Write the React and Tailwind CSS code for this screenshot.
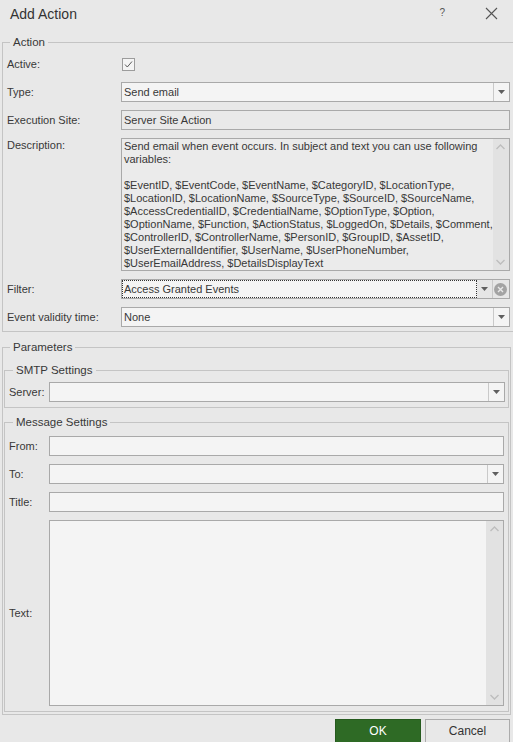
import React from 'react'

const DESC_LINES = [
  'Send email when event occurs. In subject and text you can use following',
  'variables:',
  '',
  '$EventID, $EventCode, $EventName, $CategoryID, $LocationType,',
  '$LocationID, $LocationName, $SourceType, $SourceID, $SourceName,',
  '$AccessCredentialID, $CredentialName, $OptionType, $Option,',
  '$OptionName, $Function, $ActionStatus, $LoggedOn, $Details, $Comment,',
  '$ControllerID, $ControllerName, $PersonID, $GroupID, $AssetID,',
  '$UserExternalIdentifier, $UserName, $UserPhoneNumber,',
  '$UserEmailAddress, $DetailsDisplayText',
]

function Arrow() {
  return (
    <svg width="7" height="4" viewBox="0 0 7 4">
      <path d="M0 0 H7 L3.5 4 Z" fill="#5f5f5f" />
    </svg>
  )
}

function DropButton() {
  return (
    <div className="w-[16px] h-full shrink-0 border-l border-[#c9c9c9] flex items-center justify-center">
      <Arrow />
    </div>
  )
}

function Chevron({ up }) {
  return (
    <svg width="9" height="6" viewBox="0 0 9 6">
      <path d={up ? 'M0.5 5 L4.5 1 L8.5 5' : 'M0.5 1 L4.5 5 L8.5 1'} fill="none" stroke="#bdbdbd" strokeWidth="1.4" />
    </svg>
  )
}

function ScrollStrip({ w }) {
  return (
    <div className={`${w} h-full shrink-0 bg-[#e2e2e2] flex flex-col items-center justify-between py-[5px]`}>
      <Chevron up />
      <Chevron />
    </div>
  )
}

function Combo({ value }) {
  return (
    <div className="flex-1 h-[20px] border border-[#a9a9a9] bg-[#f4f4f4] flex items-center">
      <div className="flex-1 pl-[2px] whitespace-nowrap">{value}</div>
      <DropButton />
    </div>
  )
}

function TextInput() {
  return <div className="flex-1 h-[20px] border border-[#a9a9a9] bg-[#f4f4f4]" />
}

function Row({ label, labelW, children, top }) {
  return (
    <div className={`flex ${top ? 'items-start' : 'items-center'}`}>
      <div className={`${labelW} shrink-0 whitespace-nowrap ${top ? 'pt-[1px]' : ''}`}>{label}</div>
      {children}
    </div>
  )
}

export default function App() {
  return (
    <div className="w-[513px] h-[742px] overflow-hidden bg-[#e8e8e8] text-[#383838] text-[11px] leading-[13px] font-['Liberation_Sans',Arial,sans-serif] flex flex-col">
      {/* title bar */}
      <div className="h-[34px] shrink-0 flex items-start pt-[6px] pl-[10px] pr-[15px]">
        <div className="text-[14px] leading-[16px] text-[#333]">Add Action</div>
        <div className="ml-auto mr-[40px] mt-[1px] text-[10px] leading-[12px] text-[#555]">?</div>
        <svg width="13" height="13" viewBox="0 0 13 13" className="mt-[1px]">
          <path d="M1 1 L12 12 M12 1 L1 12" stroke="#555" strokeWidth="1.1" />
        </svg>
      </div>

      {/* Action group */}
      <fieldset className="mx-[2px] border border-[#c4c4c4] px-[4px] pb-[4px]">
        <legend className="ml-[3px] px-[3px] text-[11.5px] leading-[16px]">Action</legend>
        <div className="flex flex-col gap-[8px] pt-[4px]">
          <Row label="Active:" labelW="w-[115px]">
            <div className="h-[20px] flex items-center">
              <div className="w-[13px] h-[13px] border border-[#9c9c9c] bg-[#f4f4f4] flex items-center justify-center">
                <svg width="11" height="11" viewBox="0 0 11 11">
                  <path d="M2 5.5 L4.3 8 L9 2.5" fill="none" stroke="#5a5a5a" strokeWidth="1" />
                </svg>
              </div>
            </div>
          </Row>
          <Row label="Type:" labelW="w-[114px]">
            <Combo value="Send email" />
          </Row>
          <Row label="Execution Site:" labelW="w-[114px]">
            <div className="flex-1 h-[20px] border border-[#a9a9a9] bg-[#e9e9e9] flex items-center pl-[2px]">
              Server Site Action
            </div>
          </Row>
          <Row label="Description:" labelW="w-[114px]" top>
            <div className="flex-1 h-[133px] border border-[#a9a9a9] bg-[#ebebeb] flex">
              <div className="flex-1 pl-[2px] pt-[1px] overflow-hidden">
                {DESC_LINES.map((l, i) => (
                  <div key={i} className="whitespace-nowrap h-[13px]">{l}</div>
                ))}
              </div>
              <ScrollStrip w="w-[16px]" />
            </div>
          </Row>
          <Row label="Filter:" labelW="w-[114px]">
            <div className="flex-1 h-[20px] border border-[#a9a9a9] bg-[#f4f4f4] flex items-stretch">
              <div className="flex-1 border border-dotted border-[#333] flex items-center pl-[1px] whitespace-nowrap">
                Access Granted Events
              </div>
              <div className="w-[16px] shrink-0 bg-[#e6e6e6] border-r border-[#c9c9c9] flex items-center justify-center">
                <Arrow />
              </div>
              <div className="w-[16px] shrink-0 bg-[#e6e6e6] flex items-center justify-center">
                <svg width="13" height="13" viewBox="0 0 13 13">
                  <circle cx="6.5" cy="6.5" r="6.5" fill="#a3a3a3" />
                  <path d="M4 4 L9 9 M9 4 L4 9" stroke="#e8e8e8" strokeWidth="1.4" />
                </svg>
              </div>
            </div>
          </Row>
          <Row label="Event validity time:" labelW="w-[114px]">
            <Combo value="None" />
          </Row>
        </div>
      </fieldset>

      {/* Parameters group */}
      <fieldset className="mx-[2px] mt-[7px] border border-[#c4c4c4] px-[1px] pb-[2px]">
        <legend className="ml-[6px] px-[3px] text-[11.5px] leading-[16px]">Parameters</legend>

        <fieldset className="mt-[7px] border border-[#c4c4c4] pl-[4px] pr-[3px] pb-[5px]">
          <legend className="ml-[4px] px-[3px] text-[11.5px] leading-[16px]">SMTP Settings</legend>
          <div className="pt-[4px]">
            <Row label="Server:" labelW="w-[40px]">
              <Combo value="" />
            </Row>
          </div>
        </fieldset>

        <fieldset className="mt-[6px] border border-[#c4c4c4] pl-[4px] pr-[4px] pb-[5px]">
          <legend className="ml-[4px] px-[3px] text-[11.5px] leading-[16px]">Message Settings</legend>
          <div className="flex flex-col gap-[8px] pt-[6px]">
            <Row label="From:" labelW="w-[40px]">
              <TextInput />
            </Row>
            <Row label="To:" labelW="w-[40px]">
              <Combo value="" />
            </Row>
            <Row label="Title:" labelW="w-[40px]">
              <TextInput />
            </Row>
            <Row label="Text:" labelW="w-[40px]">
              <div className="flex-1 h-[186px] border border-[#a9a9a9] bg-[#f4f4f4] flex">
                <div className="flex-1" />
                <ScrollStrip w="w-[17px]" />
              </div>
            </Row>
          </div>
        </fieldset>
      </fieldset>

      {/* buttons */}
      <div className="mt-[4px] flex justify-end gap-[4px] pr-[3px]">
        <button className="w-[86px] h-[24px] bg-[#2e6a25] text-white text-[12px] border border-[#255a1e]">OK</button>
        <button className="w-[85px] h-[24px] bg-[#e8e8e8] text-[#333] text-[12px] border border-[#acacac]">Cancel</button>
      </div>
    </div>
  )
}
